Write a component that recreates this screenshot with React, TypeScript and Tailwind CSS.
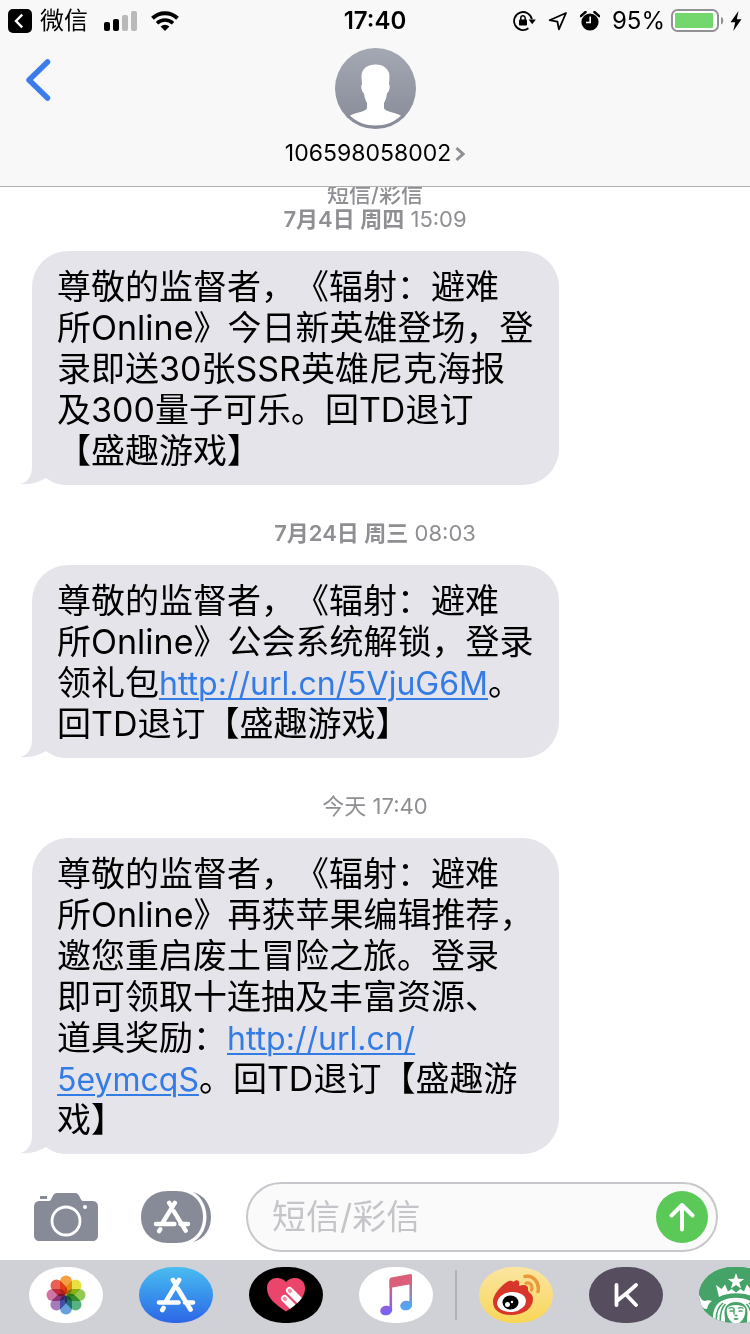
import type { ReactNode } from 'react';

type Part = { text: string; href?: string };
type Message = { id: string; label?: string; date: string; time: string; strong: boolean; parts: Part[] };

const messages: Message[] = [
  {
    id: 'm1',
    label: '短信/彩信',
    date: '7月4日 周四',
    time: '15:09',
    strong: true,
    parts: [
      {
        text: '尊敬的监督者，《辐射：避难\n所Online》今日新英雄登场，登\n录即送30张SSR英雄尼克海报\n及300量子可乐。回TD退订\n【盛趣游戏】',
      },
    ],
  },
  {
    id: 'm2',
    date: '7月24日 周三',
    time: '08:03',
    strong: true,
    parts: [
      { text: '尊敬的监督者，《辐射：避难\n所Online》公会系统解锁，登录\n领礼包' },
      { text: 'http://url.cn/5VjuG6M', href: 'http://url.cn/5VjuG6M' },
      { text: '。\n回TD退订【盛趣游戏】' },
    ],
  },
  {
    id: 'm3',
    date: '今天',
    time: '17:40',
    strong: false,
    parts: [
      {
        text: '尊敬的监督者，《辐射：避难\n所Online》再获苹果编辑推荐，\n邀您重启废土冒险之旅。登录\n即可领取十连抽及丰富资源、\n道具奖励：',
      },
      { text: 'http://url.cn/\n5eymcqS', href: 'http://url.cn/5eymcqS' },
      { text: '。回TD退订【盛趣游\n戏】' },
    ],
  },
];

function StatusBar() {
  return (
    <div className="grid h-[41px] grid-cols-[1fr_auto_1fr] items-center pl-2 pr-2 text-black">
      <div className="flex items-center">
        <svg className="size-6" viewBox="0 0 24 24" aria-hidden="true">
          <rect width="24" height="24" rx="5" fill="#000" />
          <path d="M14.2 5.6 8 12l6.2 6.4" fill="none" stroke="#fff" strokeWidth="2.4" />
        </svg>
        <span className="ml-2 text-2xl leading-8">微信</span>
        <svg className="ml-4 h-5 w-[33px]" viewBox="0 0 33 20" aria-hidden="true">
          <rect x="0" y="11" width="6" height="9" rx="2" />
          <rect x="9" y="8" width="6" height="12" rx="2" />
          <rect x="18" y="4" width="6" height="16" rx="2" fill="#b9b9b9" />
          <rect x="27" y="0" width="6" height="20" rx="2" fill="#b9b9b9" />
        </svg>
        <svg className="ml-3.5 h-5 w-7" viewBox="0 0 28 20" aria-hidden="true">
          <path d="M1.5 7.3a18 18 0 0 1 25 0" fill="none" stroke="#000" strokeWidth="4" />
          <path d="M6 12.2a11.6 11.6 0 0 1 16 0" fill="none" stroke="#000" strokeWidth="3.6" />
          <path d="M9.6 15.4a6.6 6.6 0 0 1 8.8 0L14 20Z" />
        </svg>
      </div>
      <span className="text-2xl font-semibold leading-8">17:40</span>
      <div className="flex items-center justify-end">
        <svg className="h-5 w-[23px]" viewBox="0 0 23 20" fill="none" stroke="#000" strokeWidth="1.8" aria-hidden="true">
          <path d="M18.9 8.2A9 9 0 1 0 15.4 17.3" />
          <path d="M15.6 8.6h7.2l-3.6 4.6z" fill="#000" stroke="none" />
          <rect x="6" y="8.6" width="8" height="6" rx="0.8" fill="#000" stroke="none" />
          <path d="M7.8 9V7a2.2 2.2 0 0 1 4.4 0v2" strokeWidth="1.5" />
        </svg>
        <svg className="ml-3 size-5" viewBox="0 0 20 20" aria-hidden="true">
          <path d="M18 2 1.6 9.2l7.8 1.5 1.5 7.7z" fill="none" stroke="#000" strokeWidth="1.8" strokeLinejoin="round" />
        </svg>
        <svg className="ml-3 size-5" viewBox="0 0 20 20" aria-hidden="true">
          <circle cx="10" cy="11" r="8.6" />
          <path d="M10.2 5.5v6H6" fill="none" stroke="#fff" strokeWidth="1.6" />
          <path d="M.8 5.200 5.600 1M19.200 5.200 14.400 1" stroke="#000" strokeWidth="2.4" strokeLinecap="round" />
        </svg>
        <span className="ml-3 text-2xl leading-8">95%</span>
        <svg className="ml-1.5 h-6 w-[53px]" viewBox="0 0 53 24" aria-hidden="true">
          <rect x="1" y="1" width="46" height="21" rx="5.5" fill="#fff" stroke="#929296" strokeWidth="2" />
          <rect x="4" y="4" width="38" height="15" rx="1" fill="#73d76d" />
          <path d="M50 8c3 .6 3 7 0 7.500z" fill="#8e8e93" />
        </svg>
        <svg className="ml-1.5 h-5 w-3" viewBox="0 0 12 20" aria-hidden="true">
          <path d="M8.5 0 .5 11.300h4.700L3.300 20 11.500 8.300H6.800z" />
        </svg>
      </div>
    </div>
  );
}

function Avatar() {
  return (
    <svg className="size-[81px]" viewBox="0 0 81 81" aria-hidden="true">
      <defs>
        <linearGradient id="avatarFill" x1="0" y1="0" x2="0" y2="1">
          <stop offset="0" stopColor="#a4a8b3" />
          <stop offset="1" stopColor="#868b97" />
        </linearGradient>
      </defs>
      <circle cx="40.5" cy="40.5" r="40.5" fill="url(#avatarFill)" />
      <path
        fill="#fff"
        d="M40.5 16.500c8 0 14 4.500 14 12 0 3-.5 5-.5 8 1.500 1 .5 7-2 9-.5 4-1.500 7-3 9.500V60c1 3.500 9 4 17 7.500C59 74.500 50 77.500 40.500 77.500S22 74.500 15 67.500c8-3.500 16-4 17-7.500v-5c-1.500-2.500-2.500-5.500-3-9.500-2.500-2-3.500-8-2-9 0-3-.5-5-.5-8 0-8 6-12 14-12z"
      />
    </svg>
  );
}

function Header() {
  return (
    <header className="shrink-0 border-b border-[#b2b2b2] bg-[#f8f8f8] pb-4">
      <StatusBar />
      <div className="grid grid-cols-[1fr_auto_1fr] items-start pt-[7px]">
        <button type="button" aria-label="返回" className="ml-[25px] mt-2.5 w-7">
          <svg className="h-11 w-[26px]" viewBox="0 0 26 44" aria-hidden="true">
            <path d="M22.5 4 4 22l18.500 18" fill="none" stroke="#3b7cec" strokeWidth="5.5" strokeLinecap="round" strokeLinejoin="round" />
          </svg>
        </button>
        <button type="button" className="flex flex-col items-center gap-2 text-black">
          <Avatar />
          <span className="flex items-center gap-1 text-[23px] leading-[33px]">
            106598058002
            <svg className="h-4 w-2.5" viewBox="0 0 10 16" aria-hidden="true">
              <path d="M1.5 2 8 8l-6.500 6" fill="none" stroke="#8e8e93" strokeWidth="3" />
            </svg>
          </span>
        </button>
      </div>
    </header>
  );
}

function Bubble({ parts }: { parts: Part[] }) {
  return (
    <div className="relative ml-8 w-fit min-w-[527px] whitespace-pre-line rounded-[36px] bg-[#e5e4ea] pb-3.5 pl-[25px] pr-5 pt-[15px] text-[34px] leading-[41px] text-black">
      <svg className="absolute -left-[11px] bottom-0 h-9 w-[46px]" viewBox="0 0 46 36" aria-hidden="true">
        <path d="M11 0v17c0 9-3 15-11 18 9 1 18-2 25-6 7 5 13 7 21 7V0z" fill="#e5e4ea" />
      </svg>
      <p className="relative">
        {parts.map((part) =>
          part.href ? (
            <a key={part.text} href={part.href} className="text-[32px] leading-8 text-[#337be5] underline decoration-2 underline-offset-3">
              {part.text}
            </a>
          ) : (
            <span key={part.text}>{part.text}</span>
          ),
        )}
      </p>
    </div>
  );
}

function StoreGlyph({ className }: { className: string }) {
  return (
    <svg className={className} viewBox="0 0 40 36" fill="none" stroke="#fff" strokeWidth="4.7" strokeLinecap="round" aria-hidden="true">
      <path d="M17 3 19.500 7M23 3 10.500 23.500M22 12l12.500 20.500M3 25.500h19.500M29 25.500h8M7.500 31l-1.200 2" />
    </svg>
  );
}

function Composer() {
  return (
    <form className="flex shrink-0 items-center bg-white py-2 pl-[34px] pr-8" onSubmit={(e) => e.preventDefault()}>
      <button type="button" aria-label="相机">
        <svg className="h-12 w-16" viewBox="0 0 64 48" aria-hidden="true">
          <path
            fill="#868b97"
            d="M6 8h9c3 0 3-8 8-8h18c5 0 5 8 8 8h9c4 0 6 2 6 6v28c0 4-2 6-6 6H6c-4 0-6-2-6-6V14c0-4 2-6 6-6z"
          />
          <rect x="6" y="3" width="7" height="3" fill="#868b97" />
          <circle cx="32" cy="28" r="14" fill="none" stroke="#fff" strokeWidth="2.8" />
          <circle cx="51" cy="14" r="2" fill="#fff" />
        </svg>
      </button>
      <button type="button" aria-label="应用" className="ml-[43px] grid">
        <svg className="col-start-1 row-start-1 h-[52px] w-[70px]" viewBox="0 0 70 52" aria-hidden="true">
          <path d="M52 1c24 6 24 44 0 50 18-10 18-40 0-50z" fill="#868b97" />
          <path d="M27 0h8c18 0 27 12 27 26S53 52 35 52h-8C10 52 0 40 0 26S10 0 27 0z" fill="#868b97" />
        </svg>
        <span className="col-start-1 row-start-1 flex items-center pl-3">
          <StoreGlyph className="h-[34px] w-[38px]" />
        </span>
      </button>
      <div className="ml-[35px] flex h-[70px] min-w-0 flex-1 items-center rounded-full border-2 border-[#c7c7cc] bg-[#fafafa] pl-6 pr-2">
        <input
          aria-label="短信/彩信"
          placeholder="短信/彩信"
          className="min-w-0 flex-1 bg-transparent text-[34px] leading-[48px] outline-none placeholder:text-[#c4c4c9]"
        />
        <button type="submit" aria-label="发送" className="shrink-0">
          <svg className="size-[52px]" viewBox="0 0 52 52" aria-hidden="true">
            <circle cx="26" cy="26" r="26" fill="#5bc957" />
            <path d="M26 38.500V14M15.500 24.500 26 14l10.500 10.500" fill="none" stroke="#fff" strokeWidth="4" strokeLinecap="round" strokeLinejoin="round" />
          </svg>
        </button>
      </div>
    </form>
  );
}

function DockApp({ name, className, children }: { name: string; className: string; children: ReactNode }) {
  return (
    <button
      type="button"
      aria-label={name}
      className={`flex h-14 w-[74px] shrink-0 items-center justify-center overflow-hidden rounded-[34px/28px] ${className}`}
    >
      {children}
    </button>
  );
}

const petals = ['#f3962a', '#e6dc2c', '#86c440', '#45aa74', '#5597d8', '#9d6bb4', '#cb659c', '#e84f42'];

function Photos() {
  return (
    <svg className="size-10" viewBox="0 0 40 40" aria-hidden="true">
      {petals.map((color, i) => (
        <rect
          key={color}
          x="14"
          y="0.5"
          width="12"
          height="19"
          rx="6"
          fill={color}
          transform={`rotate(${i * 45} 20 20)`}
          className="opacity-90 mix-blend-multiply"
        />
      ))}
    </svg>
  );
}

function HeartHands() {
  return (
    <svg className="h-[34px] w-[38px]" viewBox="0 0 38 34" aria-hidden="true">
      <defs>
        <clipPath id="heartClip">
          <path d="M19 33.500C9 27 0 20 0 10.500-.3-1 13.500-3 19 4 24.500-3 38.300-1 38 10.500 38 20 29 27 19 33.500z" />
        </clipPath>
      </defs>
      <g clipPath="url(#heartClip)">
        <rect width="38" height="34" fill="#ec456b" />
        <path d="M22.5 12.500 38 28M17.500 20.500 33 36" stroke="#fff" strokeWidth="7" strokeLinecap="round" />
        <path d="m22.500 12.500.8.8M17.500 20.500l.8.8" stroke="#f18ba3" strokeWidth="3.6" strokeLinecap="round" />
      </g>
    </svg>
  );
}

function Music() {
  return (
    <svg className="h-[42px] w-8" viewBox="0 0 32 42" aria-hidden="true">
      <defs>
        <linearGradient id="noteLeft" gradientUnits="userSpaceOnUse" x1="0" y1="8" x2="0" y2="38">
          <stop offset="0" stopColor="#dc5f79" />
          <stop offset="1" stopColor="#7d62f0" />
        </linearGradient>
        <linearGradient id="noteRight" gradientUnits="userSpaceOnUse" x1="0" y1="5" x2="0" y2="32">
          <stop offset="0" stopColor="#dc5f79" />
          <stop offset="1" stopColor="#54a5f3" />
        </linearGradient>
      </defs>
      <g fill="url(#noteLeft)">
        <rect x="9.5" y="6" width="2.6" height="31" />
        <ellipse cx="6.2" cy="36.5" rx="6" ry="4.8" transform="rotate(-12 6.2 36.5)" />
      </g>
      <g fill="url(#noteRight)">
        <rect x="29.4" y="2" width="2.6" height="30" />
        <ellipse cx="26.2" cy="31.5" rx="6" ry="4.8" transform="rotate(-12 26.2 31.5)" />
      </g>
      <path d="M9.5 5.500q0-1.700 1.700-2L30.500 0Q32 0 32 1.500V10L9.500 14z" fill="#dc5f79" />
    </svg>
  );
}

function Weibo() {
  return (
    <svg className="h-[43px] w-12" viewBox="0 0 48 43" aria-hidden="true">
      <path d="M21 8c5-4 7-1 6 4 5-2 10-1 9 4 0 3 5 3 5 9 0 9-9 16-22 16C8 41 1 36 1 28 1 19 12 9 17 7c3-1 5 0 4 4z" fill="#d8352b" />
      <ellipse cx="19.5" cy="28" rx="14.5" ry="10" fill="#fff" transform="rotate(-7 19.5 28)" />
      <ellipse cx="18.5" cy="28.5" rx="8" ry="7" fill="#000" />
      <circle cx="15.5" cy="30.5" r="2.5" fill="#fff" />
      <circle cx="20" cy="28" r="1.2" fill="#fff" />
      <path d="M33 2.500c8-2 15 6 13 15" fill="none" stroke="#e99a3b" strokeWidth="3.5" strokeLinecap="round" />
      <path d="M34 9c4-1 7 2 5.500 7" fill="none" stroke="#e99a3b" strokeWidth="3.2" strokeLinecap="round" />
    </svg>
  );
}

function Siren() {
  return (
    <svg className="h-14 w-[74px]" viewBox="0 0 74 56" aria-hidden="true">
      <rect width="74" height="56" fill="#45a367" />
      <path d="m37 6 2 5.800 6.200.1-4.900 3.700 1.800 5.900L37 18l-5.100 3.500 1.800-5.900-4.900-3.700 6.200-.1z" fill="#fff" />
      <path
        d="M20 30 17 18l5.500 4 3.500-4.500 3 7 3.500-2.500 4.500 3.500 4.500-3.500 3.500 2.500 3-7 3.500 4.500 5.500-4L54 30c-9-5-25-5-34 0z"
        fill="#fff"
      />
      <path d="M0 28c2 3 3 6 6 6 2-1 4-1 7 0-3 2-4 4-5 8-3 0-6-2-8-6zM74 28c-2 3-3 6-6 6-2-1-4-1-7 0 3 2 4 4 5 8 3 0 6-2 8-6z" fill="#fff" />
      <path d="M14.5 58c-2-12 1-20 8-24 8-4.500 21-4.500 29 0 7 4 10 12 8 24z" fill="#fff" />
      <path
        d="M18 58c-2-11 1-18 6-22M21.500 58c-1-10 0-16 5-21M56 58c2-11-1-18-6-22M52.500 58c1-10 0-16-5-21"
        fill="none"
        stroke="#45a367"
        strokeWidth="1.6"
      />
      <path d="M25 58c2-5 .5-8 .5-12 0-7 4-11 11.500-11s11.500 4 11.500 11c0 4-1.500 7 .5 12z" fill="#45a367" />
      <path d="M28 41c3-4 15-4 18 0 1 6-1 11-4.500 14q-4.500 3-9 0C29 52 27 47 28 41z" fill="#fff" />
      <path d="M29.5 41.500q3-1.800 5.500 0v6M44.500 41.500q-3-1.800-5.500 0M30.500 44h4M39.500 44h4M35.500 48.500h3" fill="none" stroke="#45a367" strokeWidth="1.4" />
      <path d="M34 51.500q3-1.200 6 0-3 3-6 0z" fill="#45a367" />
    </svg>
  );
}

function Dock() {
  return (
    <nav aria-label="应用" className="flex shrink-0 gap-9 overflow-hidden bg-[#d0d1d7] pb-[11px] pl-[29px] pt-[7px]">
      <DockApp name="照片" className="bg-white">
        <Photos />
      </DockApp>
      <DockApp name="App Store" className="bg-linear-to-b from-[#4bbcf0] to-[#2f65e6]">
        <StoreGlyph className="h-9 w-10" />
      </DockApp>
      <DockApp name="Digital Touch" className="bg-black">
        <HeartHands />
      </DockApp>
      <div className="flex shrink-0 items-center gap-[22px]">
        <DockApp name="音乐" className="bg-white">
          <Music />
        </DockApp>
        <span className="h-[50px] w-0.5 bg-[#b1b2b8]" />
        <DockApp name="微博" className="bg-linear-to-b from-[#fbe5a0] to-[#f8d656]">
          <Weibo />
        </DockApp>
      </div>
      <DockApp name="Keep" className="bg-[#564d5e]">
        <svg className="size-6" viewBox="0 0 24 24" fill="none" stroke="#fff" strokeWidth="3.8" strokeLinecap="round" aria-hidden="true">
          <path d="M2.5 2v20M22 2 12.500 10.500M3.500 17.500l8-6.500L22 22" />
        </svg>
      </DockApp>
      <DockApp name="星巴克" className="bg-[#45a367]">
        <Siren />
      </DockApp>
    </nav>
  );
}

export default function App() {
  return (
    <div className="flex h-screen flex-col overflow-hidden bg-white font-[Inter,'Noto_Sans_CJK_SC',sans-serif] [text-spacing-trim:space-all]">
      <Header />
      <main className="flex min-h-0 flex-1 flex-col justify-end overflow-hidden pb-5">
        {messages.map((m) => (
          <section key={m.id}>
            <div className="pb-[19px] pt-9 text-center text-[22px] leading-[25px] text-[#8e8e93]">
              {m.label && <div className="font-medium">{m.label}</div>}
              <time>
                <span className={m.strong ? 'font-semibold' : ''}>{m.date}</span> {m.time}
              </time>
            </div>
            <Bubble parts={m.parts} />
          </section>
        ))}
      </main>
      <Composer />
      <Dock />
    </div>
  );
}
